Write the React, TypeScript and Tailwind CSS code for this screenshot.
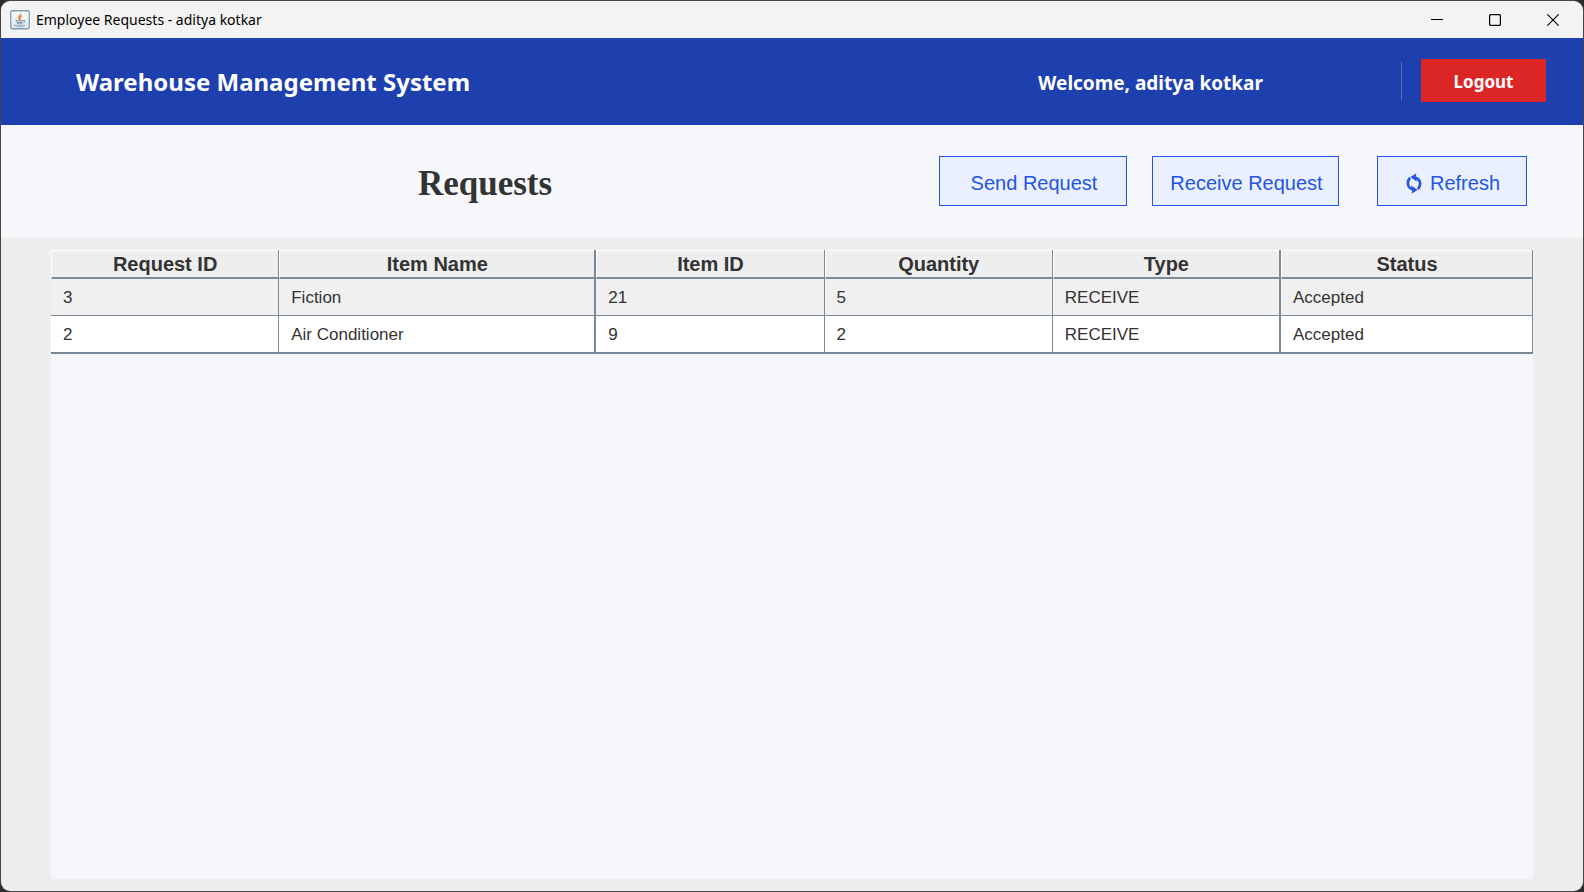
type Request = {
  id: number;
  itemName: string;
  itemId: number;
  quantity: number;
  type: string;
  status: string;
};

const requests: Request[] = [
  { id: 3, itemName: 'Fiction', itemId: 21, quantity: 5, type: 'RECEIVE', status: 'Accepted' },
  { id: 2, itemName: 'Air Conditioner', itemId: 9, quantity: 2, type: 'RECEIVE', status: 'Accepted' },
];

const columns = [
  { label: 'Request ID', width: 'w-[15.4%]', edge: 'border-r' },
  { label: 'Item Name', width: 'w-[21.4%]', edge: 'border-r-2' },
  { label: 'Item ID', width: 'w-[15.4%]', edge: 'border-r' },
  { label: 'Quantity', width: 'w-[15.4%]', edge: 'border-r' },
  { label: 'Type', width: 'w-[15.4%]', edge: 'border-r-2' },
  { label: 'Status', width: 'w-[17%]', edge: 'border-r' },
];

function JavaIcon() {
  return (
    <svg width="20" height="20" viewBox="0 0 20 20" fill="none" aria-hidden="true">
      <defs>
        <linearGradient id="tile" x1="0" y1="0" x2="0" y2="1">
          <stop offset="0" stopColor="#ffffff" />
          <stop offset="1" stopColor="#dfe3e6" />
        </linearGradient>
      </defs>
      <rect x="0.75" y="0.75" width="18.5" height="18" rx="1.5" fill="url(#tile)" stroke="#7f9db0" strokeWidth="1.3" />
      <path d="M10.8 3.500c.8 1.600-2.600 2.600-2.300 4.300.2.900 1.100 1.400 1.200 2.200M12 5.800c-1.800.8-2.400 1.500-1.900 2.400.4.700.5 1.200-.2 1.900" stroke="#ee8b3c" strokeWidth="1.400" />
      <path d="M5.500 10.400c2 .7 6 .7 8 0M6.300 12c1.800.6 4.800.6 6.400 0M7 13.500c1.400.5 3.800.5 5 0M13.500 10.500c1.900-.5 2.100 1.700-.2 2.300M4.200 14.900c-.7 1.500 9.800 1.700 11 .1" stroke="#6a8ea8" strokeWidth="1" />
    </svg>
  );
}

function RefreshIcon() {
  return (
    <svg width="16" height="21" viewBox="0 0 16 21" fill="none" aria-hidden="true">
      <path d="M8.500 4.600c3.400.4 5.600 2.900 5.600 6 0 2.300-.7 4.200-2.200 5.600" stroke="currentColor" strokeWidth="2.700" />
      <path d="M7.500 16.400c-3.400-.4-5.600-2.900-5.600-6 0-2.300.7-4.200 2.200-5.600" stroke="currentColor" strokeWidth="2.700" />
      <path d="M4.400 4 10.400.2 9.700 3.600 11 8.700z" fill="currentColor" />
      <path d="M11.600 17 5.600 20.800l.7-3.400L5 12.300z" fill="currentColor" />
    </svg>
  );
}

function TitleBar() {
  const control = 'flex h-full w-[58px] items-center justify-center';
  return (
    <div className="flex h-[37px] shrink-0 items-center bg-[#f3f3f3] pl-[9px] pr-px text-black">
      <JavaIcon />
      <span className="ml-[6px] flex-1 font-['Noto_Sans','Open_Sans',sans-serif] text-[14px] leading-5">
        Employee Requests - aditya kotkar
      </span>
      <button type="button" aria-label="Minimize" className={control}>
        <svg width="12" height="12" viewBox="0 0 12 12" aria-hidden="true">
          <path d="M0 5.500h12" stroke="#000" />
        </svg>
      </button>
      <button type="button" aria-label="Maximize" className={control}>
        <svg width="12" height="12" viewBox="0 0 12 12" fill="none" aria-hidden="true">
          <rect x="0.600" y="0.600" width="10.800" height="10.800" rx="1" stroke="#000" strokeWidth="1.200" />
        </svg>
      </button>
      <button type="button" aria-label="Close" className={control}>
        <svg width="12" height="12" viewBox="0 0 12 12" aria-hidden="true">
          <path d="M.3.3l11.400 11.400M11.700.3L.3 11.700" stroke="#000" strokeWidth="1.100" />
        </svg>
      </button>
    </div>
  );
}

function AppHeader() {
  return (
    <header className="flex h-[87px] shrink-0 items-center bg-[#1e40af] pb-[2px] pl-[75px] pr-[37px] font-['Noto_Sans','Open_Sans',sans-serif] font-bold text-white">
      <h1 className="flex-1 pt-[2px] text-[24px] leading-8">Warehouse Management System</h1>
      <p className="mr-[138px] pt-1 text-[19px] leading-6">Welcome, aditya kotkar</p>
      <div className="h-[38px] w-px bg-[#5c74a8]" />
      <button type="button" className="ml-[19px] h-[43px] w-[125px] bg-[#dc2626] pt-[2px] text-[17px]">
        Logout
      </button>
    </header>
  );
}

function Toolbar() {
  const action =
    'flex h-[50px] items-center justify-center border border-[#2555e0] bg-[#eaf0ff] pl-[2px] pt-1 text-[20px] text-[#2555e0]';
  return (
    <div className="flex h-[112px] shrink-0 items-center bg-[#f5f7fb] pl-[30px] pr-[56px]">
      <h2 className="flex-1 pt-[6px] text-center font-['Liberation_Serif',serif] text-[35px] font-bold leading-10 text-[#333]">
        Requests
      </h2>
      <button type="button" className={`${action} w-[188px]`}>Send Request</button>
      <button type="button" className={`${action} ml-[25px] w-[187px]`}>Receive Request</button>
      <button type="button" className={`${action} ml-[38px] w-[150px] gap-2`}>
        <RefreshIcon />
        Refresh
      </button>
    </div>
  );
}

function RequestTable() {
  return (
    <table className="w-full table-fixed border-separate border-spacing-0 text-[#333]">
      <thead>
        <tr>
          {columns.map((c) => (
            <th
              key={c.label}
              scope="col"
              className={`${c.width} ${c.edge} h-[29px] border-[#7a8a99] bg-[#eeeeee] p-0 text-[20px] font-bold leading-6`}
            >
              <div className="border-b-2 border-l border-t border-b-[#7a8a99] border-l-white border-t-white pb-px pt-px">
                {c.label}
              </div>
            </th>
          ))}
        </tr>
      </thead>
      <tbody className="text-[17px] leading-5">
        {requests.map((r, row) => {
          const tone =
            row === requests.length - 1 ? 'h-[38px] border-b-2' : 'h-[37px] border-b';
          const fill = row % 2 === 0 ? 'bg-[#f0f0f0]' : 'bg-white';
          return (
            <tr key={r.id} className={fill}>
              {[r.id, r.itemName, r.itemId, r.quantity, r.type, r.status].map((value, i) => (
                <td
                  key={columns[i].label}
                  className={`${tone} ${columns[i].edge} border-[#7a8a99] px-3 pb-0 pt-[2px]`}
                >
                  {value}
                </td>
              ))}
            </tr>
          );
        })}
      </tbody>
    </table>
  );
}

export default function App() {
  return (
    <div className="flex min-h-screen flex-col bg-[#2b2b2b] font-['Liberation_Sans',Arial,sans-serif]">
      <div className="flex flex-1 flex-col overflow-hidden rounded-[10px] border border-[#454545]">
        <TitleBar />
        <AppHeader />
        <Toolbar />
        <main className="flex flex-1 flex-col bg-[#eeeeee] px-[50px] pb-3 pt-[13px]">
          <div className="flex-1 bg-[#f5f7fb]">
            <RequestTable />
          </div>
        </main>
      </div>
    </div>
  );
}
